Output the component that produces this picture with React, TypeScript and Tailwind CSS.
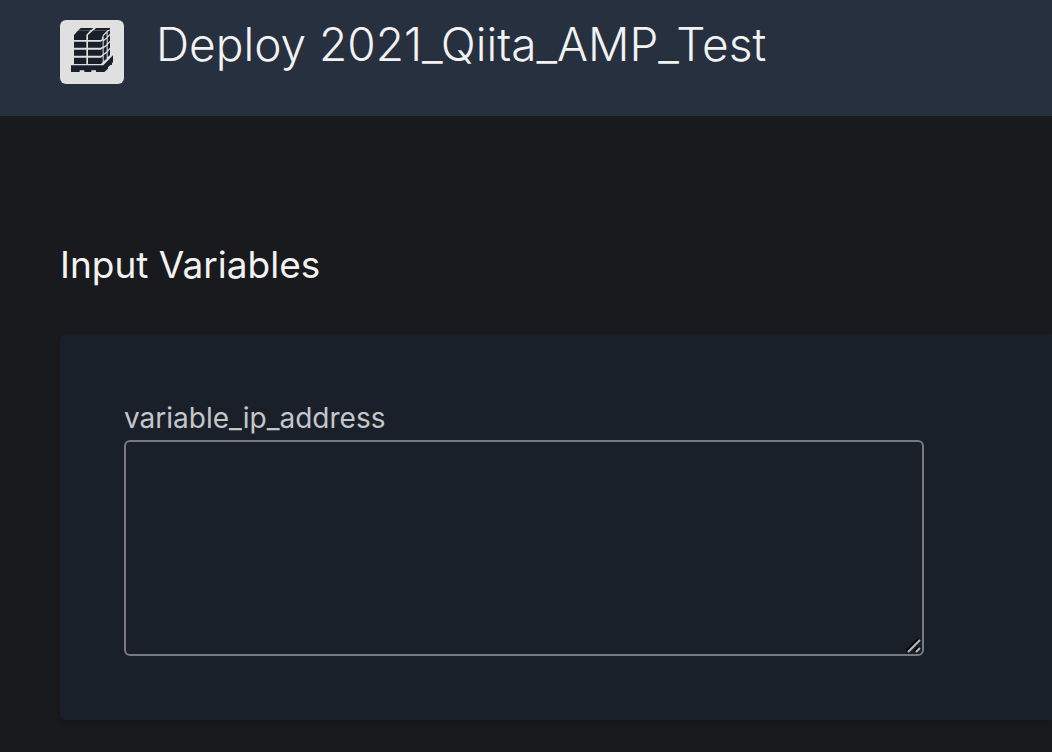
import React from 'react';

const PalletIcon: React.FC = () => (
  <svg viewBox="24 24 192 192" className="w-16 h-16 text-[#1a202b]" fill="currentColor" aria-hidden="true">
    {/* top of the load */}
    <path d="M86 48 H124 L118 54 H80 Z" />
    <path d="M132 48 H174 V52 L171 54 H126 Z" />
    <path d="M79 55 H116 L103 68 V84 H66 V69 Z" />
    <path d="M124 55 H167 L153 68 L148 84 H108 V69 Z" />
    {/* front rows */}
    <path d="M66 89 H103 V107 H66 Z M66 113 H103 V131 H66 Z M66 137 H103 V156 H66 Z" />
    <path d="M108 89 H147 L152 85 V103 L147 107 H108 Z M108 113 H147 L152 109 V127 L147 131 H108 Z M108 137 H147 L152 133 V151 L147 156 H108 Z" />
    {/* side rows */}
    <path d="M155 71 L164 63 V76 L155 83 Z M167 60 L174 55 V65 L167 72 Z" />
    <path d="M155 88 L164 80 V97 L155 104 Z M167 77 L174 70 V86 L167 93 Z" />
    <path d="M155 109 L164 102 V118 L155 125 Z M167 99 L174 91 V107 L167 114 Z" />
    <path d="M155 130 L164 123 V140 L155 148 Z M167 120 L174 112 V129 L167 136 Z" />
    {/* pallet */}
    <path d="M57 160 H154 L183 130 V151 L180 153 V158 L174 160 L168 166 V170 L157 180 H132 V175 H118 V180 H97 V175 H83 V180 H57 Z" />
  </svg>
);

const ResizeGrip: React.FC = () => (
  <svg viewBox="0 0 16 16" className="absolute right-0.5 bottom-0.5 w-4 h-4 pointer-events-none" fill="none" strokeWidth="2" aria-hidden="true">
    <path d="M0 13 L12 1 M8 13 L12 9" stroke="#05080c" />
    <path d="M2 14 L14 2 M10 14 L14 10" stroke="#b8b8b8" />
  </svg>
);

export default function App() {
  return (
    <div className="min-h-screen bg-[#191a1d] font-['Inter',sans-serif]">
      <header className="flex items-start gap-8 bg-[#27303f] px-15 pt-5 pb-8">
        <div className="shrink-0 overflow-hidden rounded-md bg-[#e0e0e0]">
          <PalletIcon />
        </div>
        <h1 className="text-[46px] leading-12 font-light text-[#f2f2f2] whitespace-nowrap">Deploy 2021_Qiita_AMP_Test</h1>
      </header>

      <main className="pt-31 pb-8 pl-15">
        <h2 className="text-[37px] leading-[50px] text-[#f2f2f2]">Input Variables</h2>

        <section className="mt-11 rounded-l-md bg-[#1a202a] p-16 shadow-md">
          <label htmlFor="variable_ip_address" className="block text-[28px] leading-10 text-[#c5c6ca]">
            variable_ip_address
          </label>
          <div className="relative mt-0.5 max-w-200">
            <textarea
              id="variable_ip_address"
              className="block h-54 w-full resize-none rounded-md border-2 border-[#77797e] bg-transparent p-3 text-[28px] text-[#f2f2f2]"
            />
            <ResizeGrip />
          </div>
        </section>
      </main>
    </div>
  );
}
